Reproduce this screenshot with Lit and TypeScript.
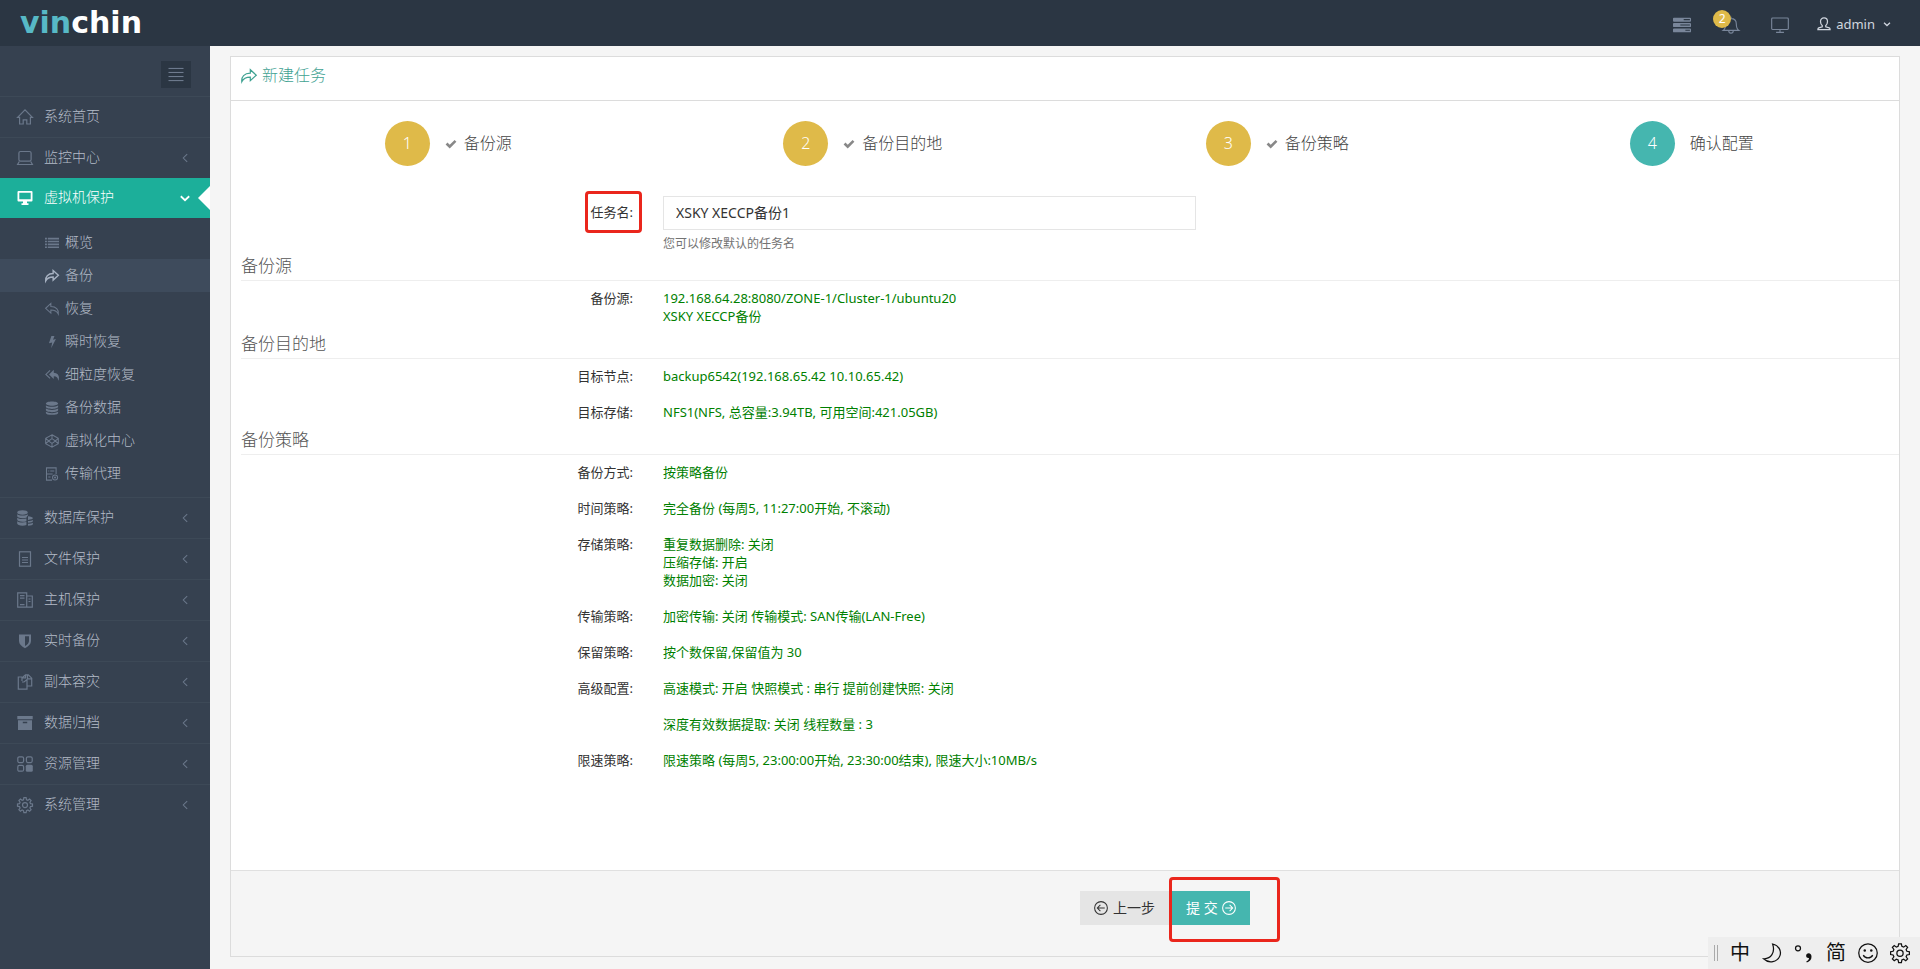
import { LitElement, html, svg, css, nothing, TemplateResult } from 'lit';
import { customElement, property, state } from 'lit/decorators.js';
import { classMap } from 'lit/directives/class-map.js';

/* Icon glyphs, drawn on a 16 x 16 grid. */
const GLYPHS: Record<string, TemplateResult> = {
  home: svg`<path class="s" d="M.6 8.4 8 .9l7.4 7.5h-2V15h-3.6v-4.2H6.2V15H2.6V8.400z"/>`,
  laptop: svg`<rect class="s" x="1.9" y="1.5" width="12.2" height="9.600" rx="1.6"/><path class="s" d="M2.300 11.500.6 14.500h14.8l-1.700-3"/>`,
  desktop: svg`<path class="f" fill-rule="evenodd" d="M1.500 1h13a1 1 0 0 1 1 1v8.500a1 1 0 0 1-1 1H10v1.800h1.500V15h-7v-1.700H6v-1.800H1.500a1 1 0 0 1-1-1V2a1 1 0 0 1 1-1zM2.300 2.800v6.400h11.400V2.800z"/>`,
  list: svg`<path class="f" d="M0 2h2.200v1.900H0zM3.200 2H16v1.900H3.200zM0 5.300h2.200v1.900H0zM3.200 5.300H16v1.900H3.200zM0 8.600h2.200v1.900H0zM3.200 8.600H16v1.900H3.200zM0 11.900h2.200v1.900H0zM3.200 11.900H16v1.900H3.200z"/>`,
  forward: svg`<path class="s" d="M.8 13.800C.2 8.800 3.300 5.200 9.300 5.200V1.700l6 5.500-6 5.500V9.200C5.300 9.200 2.500 10.200.8 13.800z"/>`,
  reply: svg`<path class="s" d="M15.200 13.800c.6-5-2.500-8.600-8.500-8.600V1.700l-6 5.500 6 5.500V9.200c4 0 6.800 1 8.500 4.600z"/>`,
  bolt: svg`<path class="f" d="M7.300 1h3.500L9.200 5.300l3.300-.8L7 15l1.200-6.500-3.700 1z"/>`,
  replyall: svg`<path class="f" d="M10 2v3.300c4 .3 6 2.700 6 5.700 0 1.300-.4 2.500-1 3.500 0-3.500-1.500-5-5-5.200v3.200L4.600 7.300z"/><path class="s" d="M5.800 2.700 1 7.300l4.800 4.500"/>`,
  database: svg`<path class="f" d="M8 .5c4 0 7 1 7 2.400S12 5.400 8 5.400 1 4.300 1 2.900 4 .5 8 .5zM1 5c1.500 1 4 1.500 7 1.500S13.500 6 15 5v1.700C15 8 12 9.100 8 9.100S1 8 1 6.700zm0 3.700c1.500 1 4 1.500 7 1.500s5.500-.5 7-1.500v1.700c0 1.300-3 2.400-7 2.400s-7-1.100-7-2.400zm0 3.700c1.500 1 4 1.500 7 1.500s5.500-.5 7-1.500v1.200c0 1.300-3 2.200-7 2.200s-7-.9-7-2.200z"/>`,
  cube: svg`<path class="s" d="M8 .9 15.200 5v6L8 15.100.8 11V5zM8 .9v4.600M8 10.500v4.600M.8 5l3.600 3-3.600 3M15.200 5l-3.600 3 3.600 3M8 5.300 12 8l-4 2.700L4 8z"/>`,
  agent: svg`<path class="s" d="M8 15H1.700V1h11v7M3.800 4.500h1M6 4.500h4.600M1.700 8h7M3.800 11.500h2.500"/><circle class="s" cx="11.500" cy="12" r="2.900"/><circle class="f" cx="11.500" cy="12" r="1.200"/>`,
  coins: svg`<path class="f" d="M5.500.3c3 0 5.300.9 5.300 2.200S8.500 4.700 5.500 4.700.2 3.800.2 2.500 2.500.3 5.500.3zM.2 4.300c1 .9 3 1.300 5.300 1.300s4.300-.4 5.300-1.300v1.500c-1 .8-1.300 1.200-1.300 2-1 .3-2.500.5-4 .5-3 0-5.300-.9-5.300-2.200zm0 3.500c1 .9 3 1.300 5.300 1.300 1.400 0 2.800-.2 3.900-.5v2.600c-1.100.4-2.500.6-3.900.6-3 0-5.300-.9-5.300-2.200zm0 3.500c1 .9 3 1.300 5.300 1.300 1.400 0 2.800-.2 3.900-.5V15c-1.100.5-2.500.7-3.900.7-3 0-5.300-1-5.300-2.200z"/><path class="f" d="M11 6.200c2.600.2 4.900.9 4.900 1.900 0 .9-2.100 1.700-4.900 1.800zM11 11c2 0 3.800-.4 4.900-1.100v1.200c0 .9-2.100 1.600-4.900 1.700zM11 13.800c2 0 3.800-.4 4.900-1.100V14c0 .9-2.100 1.600-4.900 1.700z"/>`,
  file: svg`<rect class="s" x="2.500" y=".8" width="11" height="14.400"/><path class="s" d="M5 6.500h6M5 9h6M5 11.500h6"/>`,
  host: svg`<path class="s" d="M9.500 15.200H.7V.8h9v14.400M9.700 4h5.600v11.200H9.500M3 3.700h4.500M3 6.200h4.500M3 12.700h4.500M11.500 7h2M11.500 9.500h2"/>`,
  shield: svg`<path class="f" fill-rule="evenodd" d="M2 1.500h12V8c0 3-2.500 5.500-6 7.200C4.500 13.500 2 11 2 8zm6 1.800v9.700c2.500-1.400 4-3.200 4-5V3.300z"/>`,
  copy: svg`<path class="s" d="M5 3H1.300v12.200H10V12M5 7V3.800L8.500.8h2.800l3.400 3.400V12H10M10.500.9v4h4M5.100 3.900h3.500v-3M5 8h2l3-2.500V12"/>`,
  archive: svg`<path class="f" fill-rule="evenodd" d="M.3 1h15.400v3.300H.3zM1 5.200h14V15H1zm4.800 1.500v1.500h4.400V6.700z"/>`,
  grid: svg`<rect class="s" x=".8" y=".8" width="5.800" height="5.800" rx="1.500"/><rect class="s" x="9.400" y=".8" width="5.800" height="5.800" rx="1.500"/><rect class="s" x=".8" y="9.400" width="5.800" height="5.800" rx="1.500"/><rect class="f" x="8.800" y="8.800" width="7" height="7" rx="1.500"/>`,
  gear: svg`<path class="s" d="M6.900.7h2.200l.4 2 1.400.6L12.600 2l1.500 1.500-1.200 1.700.6 1.400 2 .4v2.200l-2 .4-.6 1.400 1.200 1.700-1.500 1.500-1.700-1.200-1.400.6-.4 2H6.900l-.4-2-1.400-.6-1.700 1.200-1.500-1.500L3.100 11l-.6-1.400-2-.4V7l2-.4.6-1.400-1.200-1.700L3.400 2l1.700 1.300 1.400-.6z"/><circle class="s" cx="8" cy="8.100" r="2.500"/>`,
  left: svg`<path class="s" d="M10.500 3.500 6 8l4.500 4.500"/>`,
  down: svg`<path class="s" d="M3.200 6 8 10.500 12.800 6"/>`,
  servers: svg`<path class="f" fill-rule="evenodd" d="M.8 1.500h14.400c.5 0 .8.300.8.800v1.900c0 .5-.3.800-.8.800H.8C.3 5 0 4.700 0 4.200V2.300c0-.5.300-.8.800-.8zM9.500 2.700v1H15v-1zM.8 6.200h14.400c.5 0 .8.300.8.800v2c0 .5-.3.800-.8.800H.8C.3 9.800 0 9.500 0 9V7c0-.5.300-.8.800-.8zM6.500 7.500v1H15v-1zM.8 11h14.400c.5 0 .8.300.8.800v1.900c0 .5-.3.800-.8.800H.8c-.5 0-.8-.3-.8-.8v-1.900c0-.5.3-.8.8-.8zM11 12.200v1h4v-1z"/>`,
  bell: svg`<path class="s" d="M1 12.800c2-1.400 2.300-3 2.300-6C3.300 4 5 2.300 8 2.300S12.700 4 12.700 6.800c0 3 .3 4.600 2.300 6zM8 2.300V.6M6 13c0 1.300.9 2.200 2 2.200s2-.9 2-2.200"/>`,
  monitor: svg`<rect class="s" x=".6" y="1.800" width="14.800" height="10.200" rx=".8"/><path class="s" d="M8 12v2.200M4.500 14.500h7"/>`,
  user: svg`<path class="s" d="M6 9.800C4.800 8.800 4 7 4 5.200 4 2.700 5.600 1 8 1s4 1.700 4 4.200c0 1.800-.8 3.600-2 4.600v1.300l4 1.300c.7.300 1 1 1 2.100H1c0-1.100.3-1.800 1-2.100l4-1.300z"/>`,
  check: svg`<path class="f" d="M.8 8.500 3.300 6 6.300 9 12.800 2.500 15.200 5 6.300 13.900z"/>`,
  prev: svg`<circle class="s" cx="8" cy="8" r="7.300"/><path class="s" d="M12.300 8H4M7.300 4.500 3.800 8l3.500 3.500"/>`,
  next: svg`<circle class="s" cx="8" cy="8" r="7.300"/><path class="s" d="M3.700 8H12M8.700 4.500 12.200 8l-3.500 3.500"/>`,
  bars: svg`<path class="s" d="M0 1.500h16M0 5.800h16M0 10.200h16M0 14.500h16"/>`,
  moon: svg`<path class="s" d="M8.500.8c5 1.200 7.300 5.600 5.800 9.500-2 5-8.700 6.500-13 2.300 5.800.3 9.500-5 7.200-11.800z"/>`,
  smile: svg`<circle class="s" cx="8" cy="8" r="7.400"/><circle class="f" cx="5.400" cy="6" r="1"/><circle class="f" cx="10.600" cy="6" r="1"/><path class="s" d="M4.200 9.700c1.600 3 6 3 7.600 0"/>`,
  punct: svg`<circle class="s" cx="3.200" cy="4.200" r="2"/><path class="f" d="M9.800 14.800c1.500-.8 2.200-1.800 2.200-2.900-1.300.2-2.300-.6-2.300-1.800 0-1.100.8-1.900 2-1.900 1.400 0 2.300 1.100 2.300 2.800 0 2.200-1.300 3.900-3.700 4.600z"/>`,
};

@customElement('ui-icon')
class UiIcon extends LitElement {
  @property() name = '';
  static styles = css`
    :host { display: inline-flex; flex: none; width: 16px; height: 16px; }
    svg { width: 100%; height: 100%; display: block; overflow: visible; }
    .s { fill: none; stroke: currentColor; stroke-width: var(--stroke, 1.2); }
    .f { fill: currentColor; }
  `;
  render() {
    return html`<svg viewBox="0 0 16 16" aria-hidden="true">${GLYPHS[this.name] ?? nothing}</svg>`;
  }
}

interface MenuItem {
  icon: string;
  label: string;
  leaf?: boolean;
  children?: { icon: string; label: string }[];
}

const MENU: MenuItem[] = [
  { icon: 'home', label: '系统首页', leaf: true },
  { icon: 'laptop', label: '监控中心' },
  {
    icon: 'desktop',
    label: '虚拟机保护',
    children: [
      { icon: 'list', label: '概览' },
      { icon: 'forward', label: '备份' },
      { icon: 'reply', label: '恢复' },
      { icon: 'bolt', label: '瞬时恢复' },
      { icon: 'replyall', label: '细粒度恢复' },
      { icon: 'database', label: '备份数据' },
      { icon: 'cube', label: '虚拟化中心' },
      { icon: 'agent', label: '传输代理' },
    ],
  },
  { icon: 'coins', label: '数据库保护' },
  { icon: 'file', label: '文件保护' },
  { icon: 'host', label: '主机保护' },
  { icon: 'shield', label: '实时备份' },
  { icon: 'copy', label: '副本容灾' },
  { icon: 'archive', label: '数据归档' },
  { icon: 'grid', label: '资源管理' },
  { icon: 'gear', label: '系统管理' },
];

@customElement('side-nav')
class SideNav extends LitElement {
  @state() private current = '备份';

  static styles = css`
    :host { display: block; background: #364150; color: #b4bcc8; font-weight: 300; }
    a { color: inherit; text-decoration: none; }
    ul { list-style: none; margin: 0; padding: 0; }
    .top { display: flex; justify-content: flex-end; padding: 15px 19px 8px 0; }
    .toggle {
      display: flex; align-items: center; justify-content: center;
      width: 30px; height: 27px; border: 0; padding: 0;
      background: #2b3643; color: #79859a;
    }
    .toggle ui-icon { --stroke: 1; height: 15px; }
    .link {
      display: flex; align-items: center; gap: 11px;
      height: 40px; padding: 0 16px 0 17px; border-top: 1px solid #3d4957;
      font-size: 14px; line-height: 20px;
    }
    .link ui-icon, .sub ui-icon { color: #6b788b; }
    .label { flex: 1; padding-bottom: 2px; }
    .open {
      position: relative; border-top: 0; background: #1caf9a; color: #fff;
    }
    .open ui-icon { color: #fff; }
    .open::after {
      content: ''; position: absolute; right: 0; top: 8px;
      border: 12px solid transparent; border-left-width: 0; border-right-color: #fff;
    }
    .link .caret { width: 14px; height: 14px; margin-right: 2px; }
    .open .caret { --stroke: 2; }
    .sub { padding: 8px 0 7px; }
    .sub a {
      display: flex; align-items: center; gap: 6px;
      height: 33px; padding-left: 45px; font-size: 14px;
    }
    .sub ui-icon { width: 14px; height: 14px; }
    .sub .on { background: #3e4b5c; }
    .sub .on ui-icon { color: #a7b2c2; --stroke: 1.600; }
  `;

  render() {
    return html`
      <div class="top">
        <button class="toggle" aria-label="折叠菜单"><ui-icon name="bars"></ui-icon></button>
      </div>
      <nav>
        <ul>
          ${MENU.map(
            (m) => html`<li>
              <a href="#" class=${classMap({ link: true, open: !!m.children })}>
                <ui-icon name=${m.icon}></ui-icon>
                <span class="label">${m.label}</span>
                ${m.leaf
                  ? nothing
                  : html`<ui-icon class="caret" name=${m.children ? 'down' : 'left'}></ui-icon>`}
              </a>
              ${m.children
                ? html`<ul class="sub">
                    ${m.children.map(
                      (c) => html`<li>
                        <a
                          href="#"
                          class=${classMap({ on: c.label === this.current })}
                          @click=${(e: Event) => { e.preventDefault(); this.current = c.label; }}
                          ><ui-icon name=${c.icon}></ui-icon><span class="label">${c.label}</span></a
                        >
                      </li>`
                    )}
                  </ul>`
                : nothing}
            </li>`
          )}
        </ul>
      </nav>
    `;
  }
}

@customElement('top-bar')
class TopBar extends LitElement {
  static styles = css`
    :host {
      display: flex; align-items: center; justify-content: space-between;
      height: 46px; background: #2b3643;
    }
    a { text-decoration: none; color: inherit; }
    .logo {
      padding-left: 20px; font: 700 30px/46px "DejaVu Sans", sans-serif;
      color: #fff;
    }
    .logo b { font-weight: inherit; color: #57b9c6; }
    .tools { display: flex; align-items: center; color: #79869a; padding-top: 3px; }
    .tools ui-icon { width: 18px; height: 18px; --stroke: 1; }
    .icon { display: flex; position: relative; padding: 0; border: 0; background: none; color: inherit; margin-right: 31px; }
    .badge {
      position: absolute; left: -9px; top: -6px; width: 18px; height: 18px;
      border-radius: 50%; background: #dfba49; color: #fff;
      font: 400 12px/18px "Noto Sans", sans-serif; text-align: center;
    }
    .user {
      display: flex; align-items: center; gap: 5px; margin: 0 28px 0 -3px;
      font-size: 13px; line-height: 20px; color: #d0d6df;
      border: 0; padding: 0 0 2px; background: none; font-family: "Noto Sans", sans-serif;
    }
    .user ui-icon { width: 14px; height: 14px; --stroke: 1.4; }
    .user .caret { width: 10px; height: 10px; margin-left: 2px; --stroke: 2; }
  `;
  render() {
    return html`
      <a class="logo" href="#"><b>vin</b>chin</a>
      <div class="tools">
        <button class="icon" aria-label="任务"><ui-icon name="servers"></ui-icon></button>
        <button class="icon" aria-label="告警">
          <ui-icon name="bell"></ui-icon><span class="badge">2</span>
        </button>
        <button class="icon" aria-label="大屏"><ui-icon name="monitor"></ui-icon></button>
        <button class="user">
          <ui-icon name="user"></ui-icon>admin<ui-icon class="caret" name="down"></ui-icon>
        </button>
      </div>
    `;
  }
}

@customElement('ime-bar')
class ImeBar extends LitElement {
  static styles = css`
    :host {
      position: absolute; right: 0; bottom: 0; height: 32px; padding: 0 10px 0 6px;
      box-sizing: border-box; display: flex; align-items: center; gap: 12px;
      background: #eee; color: #111; font-size: 20px; line-height: 32px;
    }
    .grip { width: 2px; height: 16px; border: solid #aaa; border-width: 0 1px; }
    ui-icon { width: 20px; height: 20px; --stroke: 1; }
  `;
  render() {
    return html`
      <span class="grip"></span><span>中</span><ui-icon name="moon"></ui-icon
      ><ui-icon name="punct"></ui-icon><span>简</span><ui-icon name="smile"></ui-icon
      ><ui-icon name="gear"></ui-icon>
    `;
  }
}

const STEPS = ['备份源', '备份目的地', '备份策略', '确认配置'];

interface Row { label: string; blocks: string[][] }

const SECTIONS: { title: string; rows: Row[] }[] = [
  {
    title: '备份源',
    rows: [{ label: '备份源:', blocks: [['192.168.64.28:8080/ZONE-1/Cluster-1/ubuntu20', 'XSKY XECCP备份']] }],
  },
  {
    title: '备份目的地',
    rows: [
      { label: '目标节点:', blocks: [['backup6542(192.168.65.42 10.10.65.42)']] },
      { label: '目标存储:', blocks: [['NFS1(NFS, 总容量:3.94TB, 可用空间:421.05GB)']] },
    ],
  },
  {
    title: '备份策略',
    rows: [
      { label: '备份方式:', blocks: [['按策略备份']] },
      { label: '时间策略:', blocks: [['完全备份 (每周5, 11:27:00开始, 不滚动)']] },
      { label: '存储策略:', blocks: [['重复数据删除: 关闭', '压缩存储: 开启', '数据加密: 关闭']] },
      { label: '传输策略:', blocks: [['加密传输: 关闭 传输模式: SAN传输(LAN-Free)']] },
      { label: '保留策略:', blocks: [['按个数保留,保留值为 30']] },
      {
        label: '高级配置:',
        blocks: [['高速模式: 开启 快照模式 : 串行 提前创建快照: 关闭'], ['深度有效数据提取: 关闭 线程数量 : 3']],
      },
      { label: '限速策略:', blocks: [['限速策略 (每周5, 23:00:00开始, 23:30:00结束), 限速大小:10MB/s']] },
    ],
  },
];

@customElement('app-root')
class AppRoot extends LitElement {
  @state() private taskName = 'XSKY XECCP备份1';

  static styles = css`
    :host {
      display: flex; flex-direction: column; min-height: 100vh; position: relative;
      font-family: "Noto Sans", "Noto Sans CJK SC", sans-serif;
      font-size: 13px; line-height: 18px; color: #333; background: #f5f5f5;
    }
    * { box-sizing: border-box; }
    .body { flex: 1; display: flex; }
    side-nav { width: 210px; flex: none; }
    main { flex: 1; min-width: 0; display: flex; padding: 10px 20px 12px; }
    .panel {
      flex: 1; min-width: 0; display: flex; flex-direction: column;
      background: #fff; border: 1px solid #dcdcdc; overflow: hidden;
    }
    .head {
      display: flex; align-items: center; gap: 5px; margin: 0;
      padding: 7px 10px 13px; border-bottom: 1px solid #dcdcdc;
      font-size: 16px; line-height: 23px; font-weight: 300; color: #3fa292;
    }
    .content { flex: 1; padding: 20px 0 0 10px; }
    .steps {
      display: grid; grid-template-columns: repeat(4, 1fr);
      list-style: none; margin: 0 0 30px; padding: 0;
    }
    .step { display: flex; align-items: center; justify-content: center; font-size: 16px; line-height: 24px; font-weight: 300; color: #444; }
    .num {
      width: 45px; height: 45px; margin-right: 15px; border-radius: 50%;
      background: #dfba49; color: #fff; text-align: center; line-height: 45px;
    }
    .title { padding-bottom: 2px; }
    .now .num { background: #45b6af; }
    .step ui-icon { width: 12px; height: 12px; margin-right: 7px; color: #888; }
    .row { display: flex; margin: 0 -15px; }
    .key { width: 25%; padding: 0 15px; margin: 0; text-align: right; }
    .val { width: 75%; padding: 0 15px; margin: 0; color: #008000; }
    .field { width: 33.3333%; padding: 0 15px; }
    .name .key { padding-top: 7px; }
    label { position: relative; }
    .mark { position: absolute; border: 3px solid #ea261c; border-radius: 4px; pointer-events: none; }
    label .mark { inset: -12px -9px -12px -6px; }
    input {
      display: block; width: 100%; height: 34px; padding: 5px 12px 7px;
      border: 1px solid #e5e5e5; background: #fff; color: #333; font: inherit; font-size: 14px;
    }
    .help { margin: 5px 0 0; font-size: 12px; color: #737373; }
    h2 {
      margin: 0; padding-bottom: 2px; border-bottom: 1px solid #eee; font-size: 17px; line-height: 25px;
      font-weight: 300; color: #555;
    }
    dl { margin: 0; padding: 8px 0 6px; display: grid; gap: 18px; }
    p { margin: 0; }
    p + p { margin-top: 18px; }
    .line { display: block; }
    .foot {
      display: flex; gap: 3px; border-top: 1px solid #e0e0e0; background: #f5f5f5;
      padding: 20px 15px 31px calc(50% + 15px);
    }
    .btn {
      display: flex; align-items: center; gap: 5px; height: 34px; padding: 0 14px;
      border: 0; font: inherit; font-size: 14px; white-space: pre; background: #e5e5e5; color: #333;
    }
    .btn ui-icon { width: 14px; height: 14px; }
    .submit { position: relative; gap: 4px; background: #45b6af; color: #fff; }
    .submit .mark { inset: -14px -30px -17px -3px; }
  `;

  render() {
    return html`
      <top-bar></top-bar>
      <div class="body">
        <side-nav></side-nav>
        <main>
          <section class="panel">
            <h1 class="head"><ui-icon name="forward"></ui-icon>新建任务</h1>
            <div class="content">
              <ol class="steps">
                ${STEPS.map((s, i) => {
                  const now = i === STEPS.length - 1;
                  return html`<li class=${classMap({ step: true, now })}>
                    <span class="num">${i + 1}</span>
                    ${now ? nothing : html`<ui-icon name="check"></ui-icon>`}
                    <span class="title">${s}</span>
                  </li>`;
                })}
              </ol>
              <div class="row name">
                <div class="key">
                  <label for="task">任务名:<span class="mark"></span></label>
                </div>
                <div class="field">
                  <input
                    id="task"
                    type="text"
                    .value=${this.taskName}
                    @input=${(e: Event) => { this.taskName = (e.target as HTMLInputElement).value; }}
                  />
                  <p class="help">您可以修改默认的任务名</p>
                </div>
              </div>
              ${SECTIONS.map(
                (sec) => html`<h2>${sec.title}</h2>
                  <dl>
                    ${sec.rows.map(
                      (r) => html`<div class="row">
                        <dt class="key">${r.label}</dt>
                        <dd class="val">
                          ${r.blocks.map(
                            (b) => html`<p>${b.map((l) => html`<span class="line">${l}</span>`)}</p>`
                          )}
                        </dd>
                      </div>`
                    )}
                  </dl>`
              )}
            </div>
            <div class="foot">
              <button class="btn"><ui-icon name="prev"></ui-icon>上一步</button>
              <button class="btn submit">提 交<ui-icon name="next"></ui-icon><span class="mark"></span></button>
            </div>
          </section>
        </main>
      </div>
      <ime-bar></ime-bar>
    `;
  }
}
